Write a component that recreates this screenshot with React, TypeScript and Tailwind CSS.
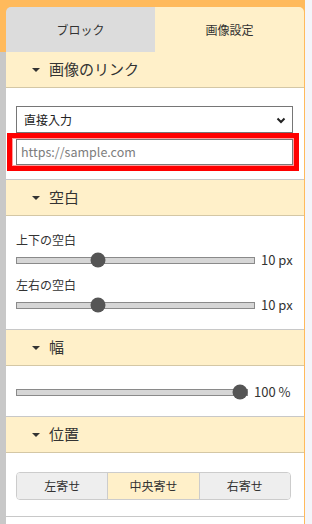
import { useState } from "react";

const font = { fontFamily: '"Noto Sans CJK JP", "Noto Sans", sans-serif' };

function SectionHeader({ title }: { title: string }) {
  return (
    <div className="flex h-[36px] items-center border-b border-[#d4c7a5] bg-[#fff0c9] pl-[26px] text-[15px] text-[#333]">
      <span className="mr-[9px] inline-block h-0 w-0 border-x-[4px] border-t-[4px] border-x-transparent border-t-[#333]" />
      {title}
    </div>
  );
}

function Slider({ pct, value, trackW }: { pct: number; value: string; trackW: number }) {
  return (
    <div className="flex h-[20px] items-center">
      <div className="relative h-[7px] border border-[#8a8a8a] bg-[#d6d6d6]" style={{ width: trackW }}>
        <div
          className="absolute top-1/2 h-[15px] w-[15px] -translate-x-1/2 -translate-y-1/2 rounded-full bg-[#555]"
          style={{ left: `${pct}%` }}
        />
      </div>
      <span className="ml-[6px] whitespace-pre text-[13px] text-[#333]">{value}</span>
    </div>
  );
}

export default function App() {
  const [align, setAlign] = useState("center");

  return (
    <div className="flex h-[524px] w-[312px] bg-[#f4f5fa]" style={font}>
      <div className="flex w-[305px] flex-col border-r border-[#ffba5c] bg-white">
        {/* tabs */}
        <div className="flex bg-[#ffba5c] pl-[6px] pt-[7px]">
          <div className="flex h-[45px] w-[149px] items-center justify-center rounded-tl-[5px] bg-[#dcdcdc] text-[12px] text-[#333]">
            ブロック
          </div>
          <div className="flex h-[45px] w-[149px] items-center justify-center rounded-tr-[5px] bg-[#fff0c9] text-[12px] text-[#333]">
            画像設定
          </div>
        </div>

        <div className="flex-1 border-l-[6px] border-[#c8c8c8]">
          <SectionHeader title="画像のリンク" />
          <div className="border-b border-[#c8c8c8] pb-[8px] pt-[18px]">
            <div className="ml-[10px] flex h-[27px] w-[277px] items-center justify-between border border-[#767676] bg-white pl-[7px] pr-[6px] text-[12px] text-[#222]">
              <span>直接入力</span>
              <svg viewBox="0 0 10 10" className="h-[10px] w-[10px]" fill="none" stroke="#222" strokeWidth="2">
                <path d="M1.5 3.5 5 7l3.5-3.5" />
              </svg>
            </div>
            <div className="ml-[1px] h-[38px] w-[292px] border-[5px] border-[#ff0000] pl-[4px] pt-[1px] shadow-[inset_0_0_0_1px_#ff9a9a]">
              <div className="flex h-[26px] w-[277px] items-center border border-[#7a7a7a] bg-white pl-[4px] text-[12.5px] text-[#7d7d7d]">
                https://sample.com
              </div>
            </div>
          </div>

          <SectionHeader title="空白" />
          <div className="border-b border-[#c8c8c8] px-[10px] pb-[14px] pt-[14px]">
            <div className="flex h-[20px] items-center text-[12px] text-[#333]">上下の空白</div>
            <Slider pct={34} value="10 px" trackW={239} />
            <div className="mt-[5px] flex h-[20px] items-center text-[12px] text-[#333]">左右の空白</div>
            <Slider pct={34} value="10 px" trackW={239} />
          </div>

          <SectionHeader title="幅" />
          <div className="border-b border-[#c8c8c8] px-[10px] pb-[14px] pt-[16px]">
            <Slider pct={97} value="100 %" trackW={232} />
          </div>

          <SectionHeader title="位置" />
          <div className="border-b border-[#c8c8c8] px-[10px] pb-[16px] pt-[19px]">
            <div className="flex h-[28px] w-[275px] overflow-hidden rounded-[4px] border border-[#cccccc] text-[12px] text-[#333]">
              {[
                ["left", "左寄せ"],
                ["center", "中央寄せ"],
                ["right", "右寄せ"],
              ].map(([key, label], i) => (
                <button
                  key={key}
                  onClick={() => setAlign(key)}
                  className={`flex flex-1 items-center justify-center ${i > 0 ? "border-l border-[#cccccc]" : ""} ${
                    align === key ? "bg-[#fff0c9]" : "bg-[#eeeeee]"
                  }`}
                >
                  {label}
                </button>
              ))}
            </div>
          </div>
        </div>
      </div>
    </div>
  );
}
